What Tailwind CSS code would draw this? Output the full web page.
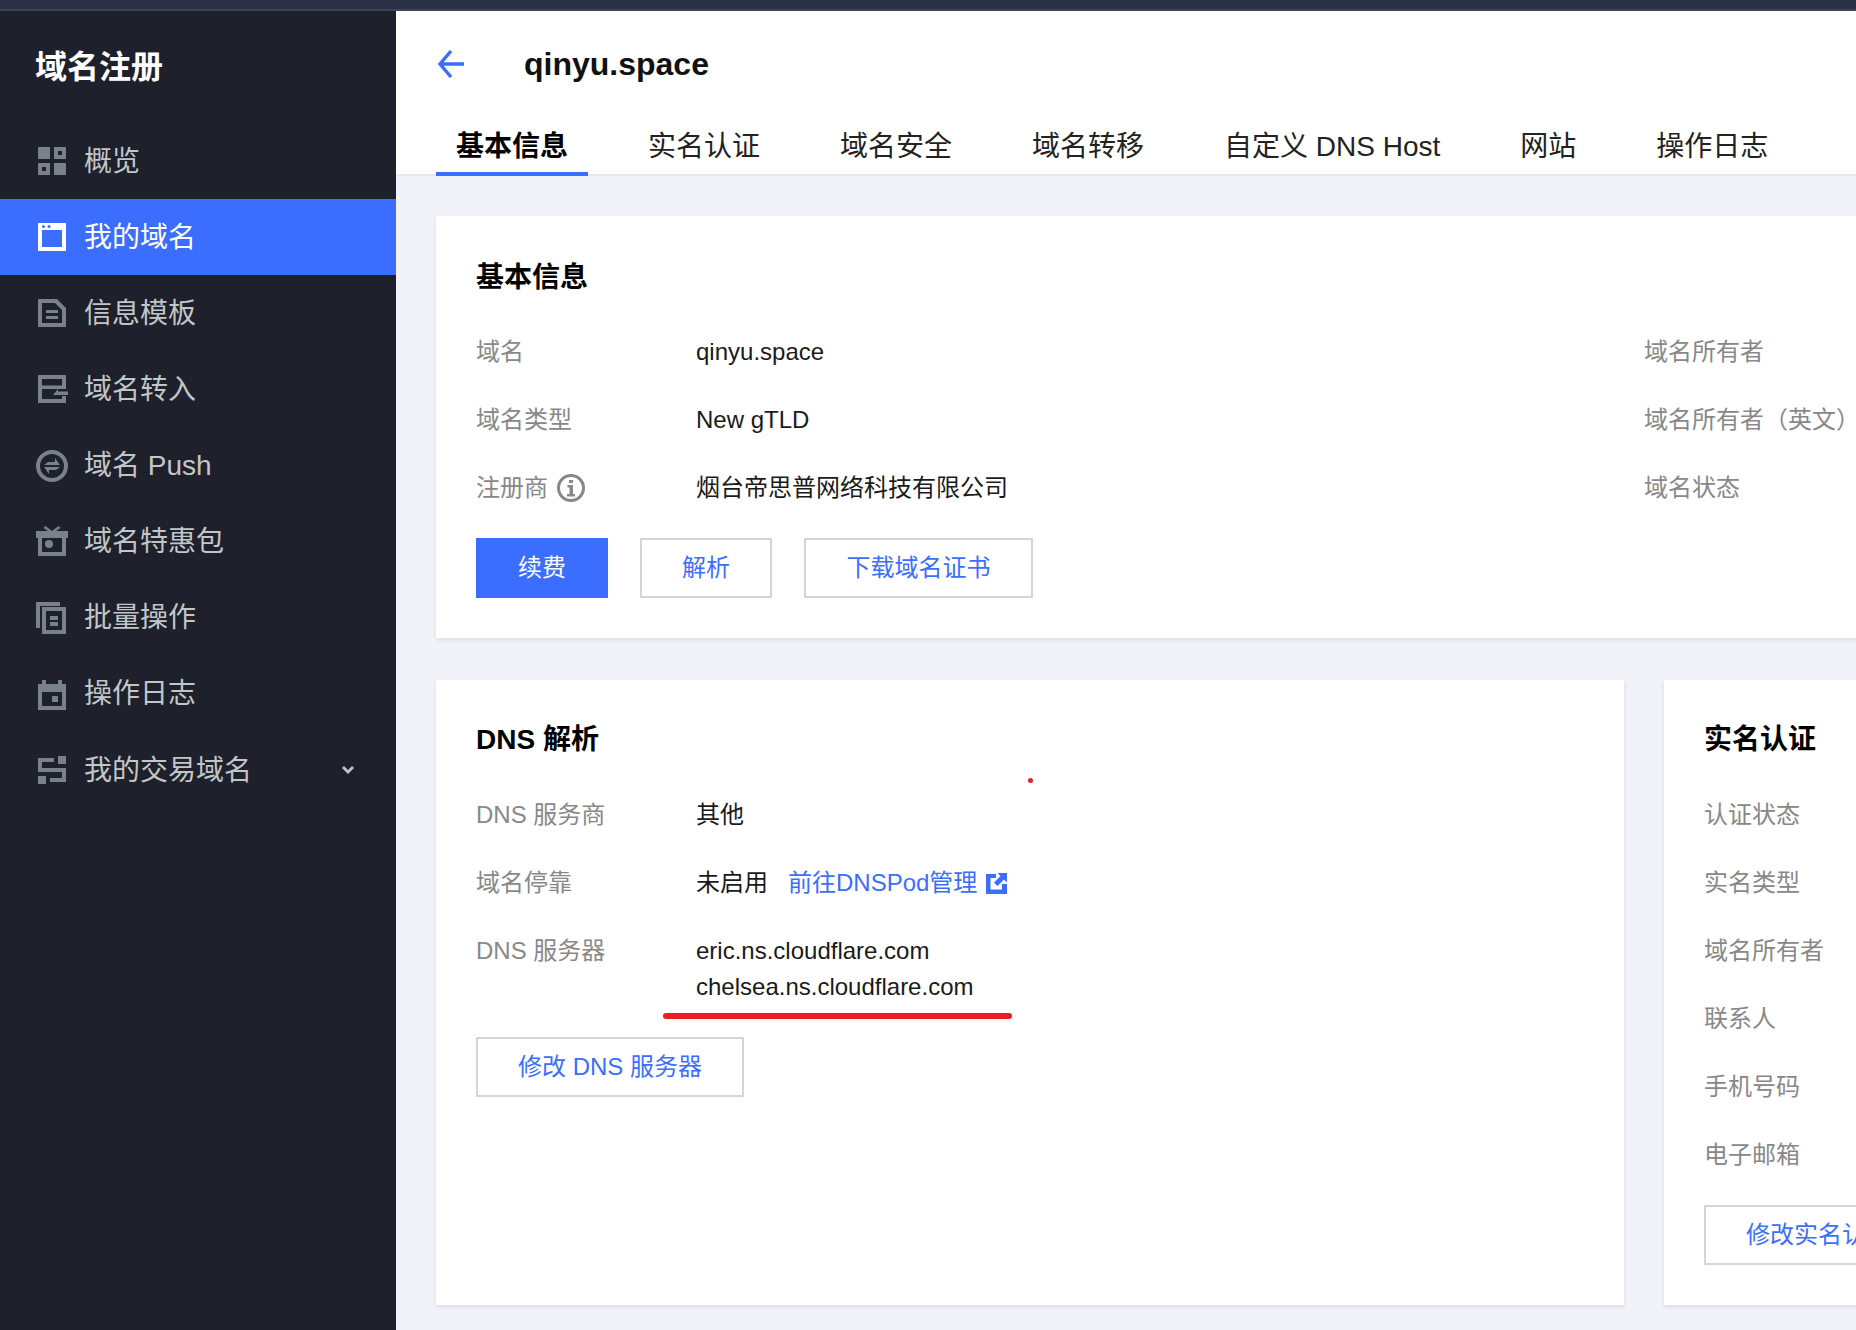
<!DOCTYPE html>
<html lang="zh"><head><meta charset="utf-8"><title>域名注册</title>
<script src="https://cdn.jsdelivr.net/npm/@tailwindcss/browser@4"></script></head>
<body class="m-0 overflow-hidden">
<div class="relative w-[1856px] h-[1330px] overflow-hidden flex flex-col bg-[#f2f3f8] font-['Liberation_Sans','Noto_Sans_CJK_SC',sans-serif] text-[24px] leading-[36px] text-[#1a1a1a]">
  <div class="h-[11px] shrink-0 bg-[#2b3245] border-b-2 border-[#3a4358]"></div>
  <div class="flex flex-1 min-h-0">
    <aside class="w-[396px] shrink-0 bg-[#1e202b] text-[#c1c6c8] text-[28px]">
      <div class="h-[112px] pl-[35px] flex items-center text-[32px] font-bold text-white">域名注册</div>
      <nav class="flex flex-col">
        <a class="h-[76.125px] flex items-center pl-[36px] gap-[16px]"><svg class="w-[32px] h-[32px]" viewBox="-2 -2 32 32" fill="#7a8289"><path fill-rule="evenodd" d="M0 0h12v12H0zM16 0h12v12H16zM20 4v4h4V4zM0 16h12v12H0zM4 20v4h4v-4zM16 16h12v12H16z"/></svg><span class="pt-[1px]">概览</span></a>
        <a class="h-[76.125px] flex items-center pl-[36px] gap-[16px] bg-[#3b6eff] text-white"><svg class="w-[32px] h-[32px]" viewBox="-2 -2 32 32" fill="#fff"><path fill-rule="evenodd" d="M0 0h28v28H0zM4 7v17h20V7z"/><circle cx="5.500" cy="3.500" r="1.500" fill="#3b6eff"/><circle cx="11" cy="3.500" r="1.500" fill="#3b6eff"/></svg><span class="pt-[1px]">我的域名</span></a>
        <a class="h-[76.125px] flex items-center pl-[36px] gap-[16px]"><svg class="w-[32px] h-[32px]" viewBox="-2 -2 32 32" fill="#7a8289"><path fill-rule="evenodd" d="M0 0h19l9 9v19H0zM4 4v20h20V11l-7-7zM8 11h12v3H8zM8 17h12v3H8z"/></svg><span class="pt-[1px]">信息模板</span></a>
        <a class="h-[76.125px] flex items-center pl-[36px] gap-[16px]"><svg class="w-[32px] h-[32px]" viewBox="-2 -2 32 32" fill="#7a8289"><path fill-rule="evenodd" d="M0 0h28v14H4v10h20v-3h4v7H0zM4 4v6.500h20V4z"/><path d="M15 20l5-6v2.500h10v3.500z"/></svg><span class="pt-[1px]">域名转入</span></a>
        <a class="h-[76.125px] flex items-center pl-[36px] gap-[16px]"><svg class="w-[32px] h-[32px]" viewBox="0 0 32 32" fill="#7a8289"><path fill-rule="evenodd" d="M16 0a16 16 0 1 0 0 32a16 16 0 0 0 0-32zM16 4a12 12 0 1 1 0 24a12 12 0 0 1 0-24z"/><path d="M8 15h16l-5-7v4h-7zM24 17H8l5 7v-4h7z"/></svg><span class="pt-[1px]">域名 Push</span></a>
        <a class="h-[76.125px] flex items-center pl-[36px] gap-[16px]"><svg class="w-[32px] h-[32px]" viewBox="0 0 32 32" fill="#7a8289"><path fill-rule="evenodd" d="M0 5h32v7h-2v18H2V12H0zM6 12v14h20V12z"/><path d="M7.500 2l2-2 6.500 5h-4zM24.500 2l-2-2L16 5h4z"/><circle cx="13" cy="18" r="4"/></svg><span class="pt-[1px]">域名特惠包</span></a>
        <a class="h-[76.125px] flex items-center pl-[36px] gap-[16px]"><svg class="w-[32px] h-[32px]" viewBox="0 0 32 32" fill="#7a8289"><path fill-rule="evenodd" d="M0 0h24v4H4v22H0zM6 5h24v27H6zM10 9v19h16V9zM14 14h8v4h-8zM14 20h8v4h-8z"/></svg><span class="pt-[1px]">批量操作</span></a>
        <a class="h-[76.125px] flex items-center pl-[36px] gap-[16px]"><svg class="w-[32px] h-[32px]" viewBox="-2 0 32 32" fill="#7a8289"><path fill-rule="evenodd" d="M0 6h4V2h4v4h12V2h4v4h4v26H0zM4 14v14h20V14zM14 18h6v6h-6z"/></svg><span class="pt-[1px]">操作日志</span></a>
        <a class="h-[76.125px] flex items-center pl-[36px] gap-[16px]"><svg class="w-[32px] h-[32px]" viewBox="-2 -2 32 32" fill="#7a8289"><path d="M0 2h16v4H4v6h24v14H12v-4h12v-6H0zM20 0h8v8h-8zM0 20h8v8H0z"/></svg><span class="flex-1 pt-[1px]">我的交易域名</span><svg class="w-[14px] h-[10px] mr-[41px]" viewBox="0 0 14 10" fill="none" stroke="#c1c6c8" stroke-width="2.800"><path d="M2 2l5 5 5-5"/></svg></a>
      </nav>
    </aside>
    <main class="flex-1 min-w-0">
      <header class="h-[165px] bg-white border-b-2 border-[#e8e9ef]">
        <div class="h-[90px] pt-[16px] box-border pl-[40px] flex items-center">
          <svg class="w-[32px] h-[32px]" viewBox="0 0 32 32" fill="none" stroke="#3b6eff" stroke-width="3.400"><path d="M28 16H4M15 3L4 16l11 13"/></svg>
          <h1 class="ml-[56px] text-[32px] font-bold text-[#111]">qinyu.space</h1>
        </div>
        <div class="flex gap-[40px] pl-[40px] text-[28px] leading-[40px] text-[#222]">
          <span class="px-[20px] h-[75px] pt-[26px] box-border border-b-[4px] border-[#3b6eff] font-bold text-black">基本信息</span>
          <span class="px-[20px] pt-[26px]">实名认证</span>
          <span class="px-[20px] pt-[26px]">域名安全</span>
          <span class="px-[20px] pt-[26px]">域名转移</span>
          <span class="px-[20px] pt-[26px]">自定义 DNS Host</span>
          <span class="px-[20px] pt-[26px]">网站</span>
          <span class="px-[20px] pt-[26px]">操作日志</span>
        </div>
      </header>
      <div class="pl-[40px] pt-[40px] flex flex-col gap-[42px] w-[1800px]">
        <section class="bg-white shadow-[0_2px_4px_rgba(54,58,80,0.12)] h-[422px] px-[40px] pt-[42px]">
          <h2 class="text-[28px] leading-[40px] font-bold text-black">基本信息</h2>
          <div class="mt-[36px] flex flex-col gap-[32px]">
            <div class="flex"><span class="w-[220px] text-[#888]">域名</span><span class="w-[948px]">qinyu.space</span><span class="text-[#888]">域名所有者</span></div>
            <div class="flex"><span class="w-[220px] text-[#888]">域名类型</span><span class="w-[948px]">New gTLD</span><span class="text-[#888]">域名所有者（英文）</span></div>
            <div class="flex"><span class="w-[220px] text-[#888] flex items-center gap-[9px]">注册商<svg class="w-[28px] h-[28px]" viewBox="0 0 28 28" fill="#888"><path fill-rule="evenodd" d="M14 0a14 14 0 1 0 0 28a14 14 0 0 0 0-28zM14 3a11 11 0 1 1 0 22a11 11 0 0 1 0-22z"/><path d="M12 6h4v3h-4zM10.500 11h5.500v9h2v2.500H10v-2.500h2.500v-6.500h-2z"/></svg></span><span class="w-[948px]">烟台帝思普网络科技有限公司</span><span class="text-[#888]">域名状态</span></div>
          </div>
          <div class="mt-[32px] flex gap-[32px]">
            <button class="h-[60px] w-[132px] bg-[#3b6eff] text-white">续费</button>
            <button class="h-[60px] w-[132px] border-2 border-[#d0d5e0] text-[#3b6eff]">解析</button>
            <button class="h-[60px] w-[229px] border-2 border-[#d0d5e0] text-[#3b6eff]">下载域名证书</button>
          </div>
        </section>
        <div class="flex gap-[40px]">
          <section class="w-[1188px] shrink-0 h-[625px] bg-white shadow-[0_2px_4px_rgba(54,58,80,0.12)] px-[40px] pt-[40px]">
            <h2 class="text-[28px] leading-[40px] font-bold text-black">DNS 解析</h2>
            <div class="mt-[37px] flex flex-col gap-[32px]">
              <div class="flex"><span class="w-[220px] text-[#888]">DNS 服务商</span><span>其他</span></div>
              <div class="flex items-center"><span class="w-[220px] text-[#888]">域名停靠</span><span>未启用</span><span class="ml-[20px] text-[#3b6eff]">前往DNSPod管理</span><svg class="ml-[9px] w-[21px] h-[21px]" viewBox="0 0 21 21" fill="#3b6eff"><path d="M0 1h10v4H4.500v11.500H16V11h5v10H0z"/><path d="M11.500 0H21v9.500l-3-3-6.500 6.500-3.500-3.500L14.500 3z"/></svg></div>
              <div class="flex"><span class="w-[220px] text-[#888]">DNS 服务器</span><span>eric.ns.cloudflare.com<br>chelsea.ns.cloudflare.com</span></div>
            </div>
            <button class="mt-[32px] h-[60px] w-[268px] border-2 border-[#d0d5e0] text-[#3b6eff]">修改 DNS 服务器</button>
          </section>
          <section class="w-[500px] shrink-0 h-[625px] bg-white shadow-[0_2px_4px_rgba(54,58,80,0.12)] px-[40px] pt-[40px] whitespace-nowrap">
            <h2 class="text-[28px] leading-[40px] font-bold text-black">实名认证</h2>
            <div class="mt-[37px] flex flex-col gap-[32px] text-[#888]">
              <span>认证状态</span><span>实名类型</span><span>域名所有者</span><span>联系人</span><span>手机号码</span><span>电子邮箱</span>
            </div>
            <button class="mt-[32px] h-[60px] px-[40px] border-2 border-[#d0d5e0] text-[#3b6eff]">修改实名认证</button>
          </section>
        </div>
      </div>
    </main>
  </div>
  <div class="absolute left-[663px] top-[1013px] w-[349px] h-[6px] rounded-full bg-[#ed1c24]"></div>
  <div class="absolute left-[1028px] top-[778px] w-[5px] h-[5px] rounded-full bg-[#ed1c24]"></div>
</div>
</body></html>
